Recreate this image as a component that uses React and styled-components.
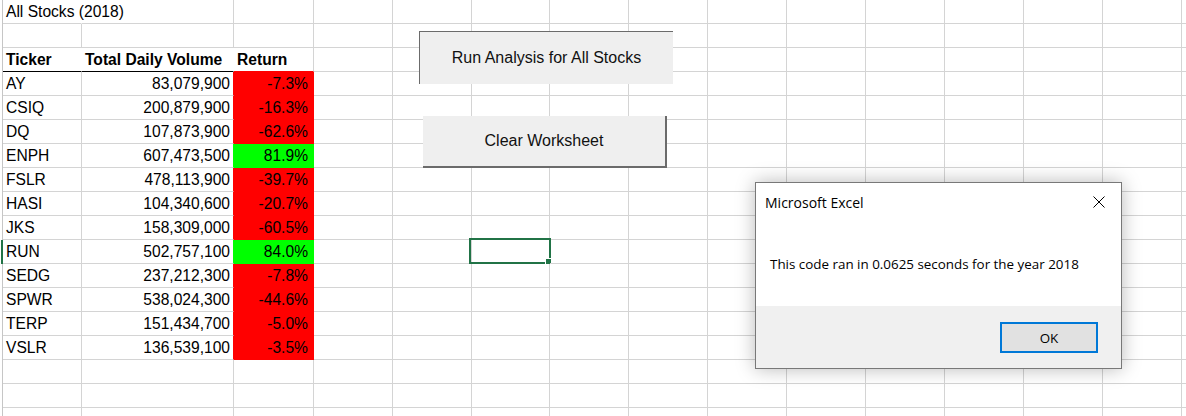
import React from "react";
import styled, { createGlobalStyle } from "styled-components";

const GlobalStyle = createGlobalStyle`
  html, body {
    margin: 0;
    padding: 0;
    background: #fff;
    overflow: hidden;
  }
`;

const GRID = "#d4d4d4";
const RED = "#ff0000";
const GREEN = "#00ff00";

const Sheet = styled.div`
  position: relative;
  width: 1186px;
  height: 416px;
  overflow: hidden;
  font-family: "Liberation Sans", Arial, sans-serif;
  font-size: 15.6px;
  color: #000;
`;

const Grid = styled.div`
  display: grid;
  grid-template-columns: 3px 79px 152px 80px 79px 79px 78px repeat(8, 79px) 1fr;
  grid-auto-rows: 24px;
`;

const RowHead = styled.div`
  box-sizing: border-box;
  border-right: ${(p) => (p.$active ? `2px solid #217346` : `1px solid #c6c6c6`)};
`;

const Cell = styled.div`
  position: relative;
  box-sizing: border-box;
  height: 24px;
  padding: 1px ${(p) => p.$padRight || 3}px 0 3px;
  line-height: 22px;
  white-space: nowrap;
  text-align: ${(p) => p.$align || "left"};
  font-weight: ${(p) => (p.$bold ? 700 : 400)};
  background: ${(p) => p.$fill || "transparent"};
  border-right: 1px solid
    ${(p) => p.$edge || p.$fill || (p.$hideRight ? "#fff" : GRID)};
  border-bottom: 1px solid ${(p) => p.$under || p.$fill || GRID};
`;

const Selection = styled.div`
  position: absolute;
  left: -3px;
  top: -2px;
  width: 82px;
  height: 26px;
  box-sizing: border-box;
  border: 2px solid #217346;
  pointer-events: none;
`;

const Handle = styled.div`
  position: absolute;
  right: -3px;
  bottom: -3px;
  width: 5px;
  height: 5px;
  background: #217346;
  border: 1px solid #fff;
`;

const MacroButton = styled.div`
  position: absolute;
  left: ${(p) => p.$x}px;
  top: ${(p) => p.$y}px;
  width: ${(p) => p.$w}px;
  height: ${(p) => p.$h}px;
  box-sizing: border-box;
  display: flex;
  align-items: center;
  justify-content: center;
  background: #efefef;
  font-size: 16px;
  color: #111;
  border-top: ${(p) => (p.$pressed ? "none" : "1px solid #6b6b6b")};
  border-left: ${(p) => (p.$pressed ? "none" : "1px solid #6b6b6b")};
  border-right: ${(p) => (p.$pressed ? "2px solid #6b6b6b" : "none")};
  border-bottom: ${(p) => (p.$pressed ? "2px solid #6b6b6b" : "none")};
`;

const Dialog = styled.div`
  position: absolute;
  left: 755px;
  top: 182px;
  width: 367px;
  height: 187px;
  box-sizing: border-box;
  border: 1px solid #787878;
  background: #fff;
  box-shadow: 0 0 18px rgba(0, 0, 0, 0.28);
  display: flex;
  flex-direction: column;
  font-family: "Open Sans", "Noto Sans", sans-serif;
  font-size: 13.4px;
  color: #000;
`;

const TitleBar = styled.div`
  height: 38px;
  display: flex;
  align-items: center;
  justify-content: space-between;
  padding: 0 16px 0 9px;
  font-size: 14px;
`;

const CloseIcon = styled.svg`
  width: 12px;
  height: 12px;
`;

const Message = styled.div`
  flex: 1;
  display: flex;
  align-items: center;
  padding-left: 14px;
`;

const Footer = styled.div`
  height: 62px;
  background: #f0f0f0;
  display: flex;
  justify-content: flex-end;
  align-items: flex-start;
  padding: 16px 23px 0 0;
  box-sizing: border-box;
`;

const OkButton = styled.div`
  width: 98px;
  height: 31px;
  box-sizing: border-box;
  border: 2px solid #0078d7;
  background: #e1e1e1;
  display: flex;
  align-items: center;
  justify-content: center;
`;

const stocks = [
  ["AY", "83,079,900", "-7.3%"],
  ["CSIQ", "200,879,900", "-16.3%"],
  ["DQ", "107,873,900", "-62.6%"],
  ["ENPH", "607,473,500", "81.9%"],
  ["FSLR", "478,113,900", "-39.7%"],
  ["HASI", "104,340,600", "-20.7%"],
  ["JKS", "158,309,000", "-60.5%"],
  ["RUN", "502,757,100", "84.0%"],
  ["SEDG", "237,212,300", "-7.8%"],
  ["SPWR", "538,024,300", "-44.6%"],
  ["TERP", "151,434,700", "-5.0%"],
  ["VSLR", "136,539,100", "-3.5%"],
];

const EXTRA = 12; // empty columns D..rest
const ROWS = 18;
const SELECTED_ROW = 10; // RUN row (0-based)
const SELECTED_COL = 2; // column F, counted from D

function EmptyCells({ row }) {
  return Array.from({ length: EXTRA }, (_, i) => (
    <Cell key={i}>
      {row === SELECTED_ROW && i === SELECTED_COL && (
        <Selection>
          <Handle />
        </Selection>
      )}
    </Cell>
  ));
}

function renderRow(r) {
  const cells = [<RowHead key="h" $active={r === SELECTED_ROW} />];
  if (r === 0) {
    cells.push(
      <Cell key="a" $hideRight>All Stocks (2018)</Cell>,
      <Cell key="b" />,
      <Cell key="c" />
    );
  } else if (r === 1) {
    cells.push(<Cell key="a" />, <Cell key="b" />, <Cell key="c" />);
  } else if (r === 2) {
    cells.push(
      <Cell key="a" $bold $hideRight $under="#000">Ticker</Cell>,
      <Cell key="b" $bold $hideRight $under="#000">Total Daily Volume</Cell>,
      <Cell key="c" $bold $under={RED}>Return</Cell>
    );
  } else if (r - 3 < stocks.length) {
    const [ticker, volume, ret] = stocks[r - 3];
    const fill = ret.startsWith("-") ? RED : GREEN;
    cells.push(
      <Cell key="a">{ticker}</Cell>,
      <Cell key="b" $align="right" $edge={fill}>{volume}</Cell>,
      <Cell key="c" $align="right" $padRight={5} $fill={fill}>{ret}</Cell>
    );
  } else {
    cells.push(<Cell key="a" />, <Cell key="b" />, <Cell key="c" />);
  }
  return (
    <React.Fragment key={r}>
      {cells}
      <EmptyCells row={r} />
    </React.Fragment>
  );
}

export default function App() {
  return (
    <Sheet>
      <GlobalStyle />
      <Grid>{Array.from({ length: ROWS }, (_, r) => renderRow(r))}</Grid>

      <MacroButton $x={419} $y={31} $w={254} $h={53}>
        Run Analysis for All Stocks
      </MacroButton>
      <MacroButton $x={423} $y={116} $w={244} $h={52} $pressed>
        Clear Worksheet
      </MacroButton>

      <Dialog>
        <TitleBar>
          <span>Microsoft Excel</span>
          <CloseIcon viewBox="0 0 12 12">
            <path d="M0.5 0.5 L11.5 11.5 M11.5 0.5 L0.5 11.5" stroke="#000" strokeWidth="1" fill="none" />
          </CloseIcon>
        </TitleBar>
        <Message>This code ran in 0.0625 seconds for the year 2018</Message>
        <Footer>
          <OkButton>OK</OkButton>
        </Footer>
      </Dialog>
    </Sheet>
  );
}
